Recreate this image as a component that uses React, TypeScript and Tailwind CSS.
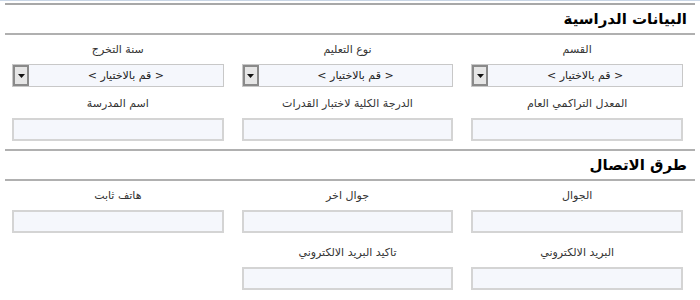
const Select = () => (
  <div className="flex h-[23px] border border-[#c8c8c8] bg-[#f5f7fc]">
    <span className="flex-1 text-center text-[11px] leading-[21px] text-[#222]">&lt; قم بالاختيار &gt;</span>
    <div className="flex h-full w-[16px] items-center justify-center border-2 border-[#8a8a8a] bg-[#e6e6e6]">
      <svg width="7" height="4" viewBox="0 0 7 4">
        <path d="M0 0h7L3.5 4z" fill="#111" />
      </svg>
    </div>
  </div>
);

const Input = () => <div className="h-[23px] border-2 border-[#d4d4d4] bg-[#f5f7fc]" />;

const Field = ({ label, children }: { label: string; children: React.ReactNode }) => (
  <div className="flex flex-col">
    <div className="h-[24px] text-center text-[11px] leading-[20px] text-[#333]">{label}</div>
    {children}
  </div>
);

const Heading = ({ title }: { title: string }) => (
  <div className="mx-[5px] border-b-2 border-[#b0b0b0] pr-[8px] h-[30px] text-[15px] font-bold leading-[28px] text-black">
    {title}
  </div>
);

export default function App() {
  return (
    <div
      dir="rtl"
      className="h-[300px] w-[700px] overflow-hidden bg-white"
      style={{ fontFamily: '"DejaVu Sans", "Noto Sans", sans-serif' }}
    >
      <div className="h-[3px] border-t border-[#c9d6e6]" />
      <div className="mx-[5px] h-[2px] bg-[#a8a8a8]" />
      <Heading title="البيانات الدراسية" />
      <div className="grid grid-cols-3 gap-x-[18px] pl-[12px] pr-[17px] pt-[5px]">
        <Field label="القسم"><Select /></Field>
        <Field label="نوع التعليم"><Select /></Field>
        <Field label="سنة التخرج"><Select /></Field>
      </div>
      <div className="grid grid-cols-3 gap-x-[18px] pl-[12px] pr-[17px] pt-[7px]">
        <Field label="المعدل التراكمي العام"><Input /></Field>
        <Field label="الدرجة الكلية لاختبار القدرات"><Input /></Field>
        <Field label="اسم المدرسة"><Input /></Field>
      </div>
      <div className="mx-[5px] mt-[8px] h-[2px] bg-[#b0b0b0]" />
      <Heading title="طرق الاتصال" />
      <div className="grid grid-cols-3 gap-x-[18px] pl-[12px] pr-[17px] pt-[5px]">
        <Field label="الجوال"><Input /></Field>
        <Field label="جوال اخر"><Input /></Field>
        <Field label="هاتف ثابت"><Input /></Field>
      </div>
      <div className="grid grid-cols-3 gap-x-[18px] pl-[12px] pr-[17px] pt-[10px]">
        <Field label="البريد الالكتروني"><Input /></Field>
        <Field label="تاكيد البريد الالكتروني"><Input /></Field>
      </div>
    </div>
  );
}
